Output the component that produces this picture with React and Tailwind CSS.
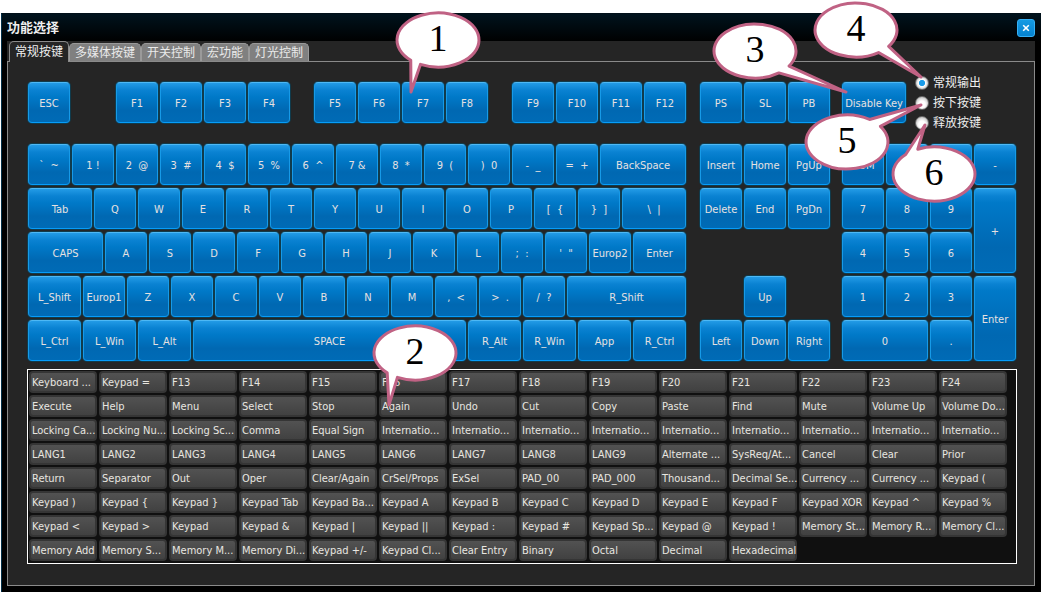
const KEY_ROWS = [
  [["` \u00a0~"], ["1 !"], ["2 \u00a0@"], ["3 \u00a0#"], ["4 \u00a0$"], ["5 \u00a0%"], ["6 \u00a0^"], ["7 &"], ["8 \u00a0*"], ["9 \u00a0("], [") \u00a00"], ["- \u00a0_"], ["= \u00a0+"], ["BackSpace", "col-span-8"]],
  [["Tab", "col-span-6"], ["Q"], ["W"], ["E"], ["R"], ["T"], ["Y"], ["U"], ["I"], ["O"], ["P"], ["[ \u00a0{"], ["} \u00a0]"], ["\\ \u00a0|", "col-span-6"]],
  [["CAPS", "col-span-7"], ["A"], ["S"], ["D"], ["F"], ["G"], ["H"], ["J"], ["K"], ["L"], ["; \u00a0:"], ["' \u00a0\""], ["Europ2"], ["Enter", "col-span-5"]],
  [["L_Shift", "col-span-5"], ["Europ1"], ["Z"], ["X"], ["C"], ["V"], ["B"], ["N"], ["M"], [", \u00a0<"], ["> \u00a0."], ["/ \u00a0?"], ["R_Shift", "col-span-11"]],
  [["L_Ctrl", "col-span-5"], ["L_Win", "col-span-5"], ["L_Alt", "col-span-5"], ["SPACE", "col-span-25"], ["R_Alt", "col-span-5"], ["R_Win", "col-span-5"], ["App", "col-span-5"], ["R_Ctrl", "col-span-5"]],
];

const FUNCTION_KEYS = [
  ["ESC"],
  ["F1", "col-span-4 col-start-9"], ["F2"], ["F3"], ["F4"],
  ["F5", "col-span-4 col-start-27"], ["F6"], ["F7"], ["F8"],
  ["F9", "col-span-4 col-start-45"], ["F10"], ["F11"], ["F12"],
];

const NAV_KEYS = [
  ["Insert"], ["Home"], ["PgUp"],
  ["Delete"], ["End"], ["PgDn"],
  ["Up", "col-span-4 col-start-5 row-start-4"],
  ["Left", "col-span-4 row-start-5"], ["Down", "col-span-4 row-start-5"], ["Right", "col-span-4 row-start-5"],
];

const PAD_KEYS = [
  ["NUM"], ["/"], ["*"], ["-"],
  ["7"], ["8"], ["9"], ["+", "col-span-4 row-span-2"],
  ["4"], ["5"], ["6"],
  ["1"], ["2"], ["3"], ["Enter", "col-span-4 row-span-2"],
  ["0", "col-span-8"], ["."],
];

const EXTRA_KEYS = [
  "Keyboard ...", "Keypad =", "F13", "F14", "F15", "F16", "F17", "F18", "F19", "F20", "F21", "F22", "F23", "F24",
  "Execute", "Help", "Menu", "Select", "Stop", "Again", "Undo", "Cut", "Copy", "Paste", "Find", "Mute", "Volume Up", "Volume Do...",
  "Locking Ca...", "Locking Nu...", "Locking Sc...", "Comma", "Equal Sign", "Internatio...", "Internatio...", "Internatio...", "Internatio...", "Internatio...", "Internatio...", "Internatio...", "Internatio...", "Internatio...",
  "LANG1", "LANG2", "LANG3", "LANG4", "LANG5", "LANG6", "LANG7", "LANG8", "LANG9", "Alternate ...", "SysReq/At...", "Cancel", "Clear", "Prior",
  "Return", "Separator", "Out", "Oper", "Clear/Again", "CrSel/Props", "ExSel", "PAD_00", "PAD_000", "Thousand...", "Decimal Se...", "Currency ...", "Currency ...", "Keypad (",
  "Keypad )", "Keypad {", "Keypad }", "Keypad Tab", "Keypad Ba...", "Keypad A", "Keypad B", "Keypad C", "Keypad D", "Keypad E", "Keypad F", "Keypad XOR", "Keypad ^", "Keypad %",
  "Keypad <", "Keypad >", "Keypad", "Keypad &", "Keypad |", "Keypad ||", "Keypad :", "Keypad #", "Keypad Sp...", "Keypad @", "Keypad !", "Memory St...", "Memory R...", "Memory Cl...",
  "Memory Add", "Memory S...", "Memory M...", "Memory Di...", "Keypad +/-", "Keypad Cl...", "Clear Entry", "Binary", "Octal", "Decimal", "Hexadecimal",
];

const TABS = ["常规按键", "多媒体按键", "开关控制", "宏功能", "灯光控制"];
const MODES = ["常规输出", "按下按键", "释放按键"];

// Balloon centre, the two points where the tail leaves the balloon, and the tail tip.
const CALLOUTS = [
  { n: 1, c: [438, 40], a: [420, 65], b: [411, 60], tip: [411, 92] },
  { n: 2, c: [415, 353], a: [397, 378], b: [387, 373], tip: [389, 405] },
  { n: 3, c: [755, 51], a: [789, 66], b: [779, 73], tip: [846, 92] },
  { n: 4, c: [856, 30], a: [890, 47], b: [879, 53], tip: [921, 77] },
  { n: 5, c: [847, 142], a: [870, 119], b: [881, 126], tip: [921, 105] },
  { n: 6, c: [934, 174], a: [905, 154], b: [917, 148], tip: [925, 125] },
];

const RX = 41;
const RY = 27;

function onBalloon([cx, cy], [x, y]) {
  const dx = (x - cx) / RX;
  const dy = (y - cy) / RY;
  const len = Math.hypot(dx, dy);
  return [cx + (RX * dx) / len, cy + (RY * dy) / len];
}

function Callout({ n, c, a, b, tip }) {
  let start = onBalloon(c, a);
  let end = onBalloon(c, b);
  const cross = (start[0] - c[0]) * (end[1] - c[1]) - (start[1] - c[1]) * (end[0] - c[0]);
  if (cross < 0) [start, end] = [end, start];
  return (
    <g>
      <path
        d={`M${end} A${RX} ${RY} 0 1 1 ${start} L${tip} Z`}
        fill="#fff"
        stroke="#c06284"
        strokeWidth="3"
        strokeLinejoin="round"
      />
      <text x={c[0]} y={c[1] + 11} textAnchor="middle" fontSize="38" fill="#000">
        {n}
      </text>
    </g>
  );
}

function Key({ label, span = "col-span-4" }) {
  return (
    <button
      type="button"
      className={`${span} flex min-w-0 items-center justify-center whitespace-nowrap rounded-[4px] border border-t-[#4db8f5] border-x-[#169ae8] border-b-[#069cfa] bg-[linear-gradient(180deg,#239be6_0px,#0a82d2_7px,#0079c8_14px,#0068b2_70%,#006bb6_100%)] pt-0.5 text-[#e6e1e1] shadow-[0_0_0_1px_rgba(0,78,110,0.55)]`}
    >
      {label}
    </button>
  );
}

function Keys({ keys }) {
  return keys.map(([label, span], i) => <Key key={i} label={label} span={span} />);
}

export default function App() {
  return (
    <div className="relative min-h-screen bg-white pl-px pr-0.5 pt-[13px] font-['DejaVu_Sans_Condensed','Noto_Sans_CJK_SC',sans-serif] text-[11px] leading-4">
      <main className="border-l border-t border-l-[#02304a] border-t-[#011019] bg-[linear-gradient(180deg,#00131d_0px,#000_28px)] pb-1.5 pl-[5px] pr-1.5">
        <header className="flex h-[27px] items-center justify-between">
          <h1 className="text-[13px] font-bold text-[#eeeeee]">功能选择</h1>
          <button
            type="button"
            aria-label="关闭"
            className="flex h-[18px] w-[18px] items-center justify-center rounded-[3px] border border-[#35b0f5] bg-[linear-gradient(180deg,#159be3,#0582cf)]"
          >
            <svg width="8" height="8" viewBox="0 0 8 8" stroke="#fff" strokeWidth="1.6">
              <path d="M1.2 1.2 6.8 6.8M6.8 1.2 1.2 6.8" />
            </svg>
          </button>
        </header>

        <div className="bg-[#252525]">
          <div role="tablist" className="flex h-5 items-end pl-0.5 text-xs">
            {TABS.map((tab, i) => (
              <button
                key={tab}
                type="button"
                role="tab"
                aria-selected={i === 0}
                className={
                  i === 0
                    ? "relative -mb-px h-[21px] rounded-t-[5px] border border-b-0 border-[#8a8a8a] bg-[#252525] px-[5px] text-[#eeeeee]"
                    : "h-[18px] rounded-t-[5px] border border-b-0 border-[#9a9a9a] bg-[#808080] px-[5px] text-[#eaeaea]"
                }
              >
                {tab}
              </button>
            ))}
          </div>

          <section className="border border-[#8a8a8a] pb-[21px] pl-[19px] pr-[17px] pt-5">
            <div className="flex px-px">
              <div className="mr-3.5 grid grow-[658] basis-0 auto-rows-[41px] grid-cols-[repeat(60,minmax(0,1fr))] gap-x-0.5">
                <Keys keys={FUNCTION_KEYS} />
              </div>
              <div className="mr-3 grid grow-[130] basis-0 auto-rows-[41px] grid-cols-[repeat(12,minmax(0,1fr))] gap-x-0.5">
                <Keys keys={[["PS"], ["SL"], ["PB"]]} />
              </div>
              <div className="grid grow-[174] basis-0 grid-cols-[repeat(16,minmax(0,1fr))] grid-rows-[41px] items-center gap-x-0.5">
                <Key label="Disable Key" span="col-span-6 h-full" />
                <fieldset className="col-span-10 -my-2 flex flex-col gap-1 pl-[7px] pt-px text-xs leading-4 text-[#eeeeee]">
                  {MODES.map((mode, i) => (
                    <label key={mode} className="flex h-4 items-center gap-1">
                      <input
                        type="radio"
                        name="mode"
                        defaultChecked={i === 0}
                        className="h-3.5 w-3.5 appearance-none rounded-full border border-[#6a6a6a] bg-[radial-gradient(circle_at_50%_60%,#fff_35%,#c4c4c4_75%)] checked:bg-[radial-gradient(circle,#1a9be8_32%,#fff_42%,#c4c4c4_75%)]"
                      />
                      {mode}
                    </label>
                  ))}
                </fieldset>
              </div>
            </div>

            <div className="mt-[21px] flex px-px">
              <div className="mr-3.5 grid grow-[658] basis-0 auto-rows-[41px] grid-cols-[repeat(60,minmax(0,1fr))] gap-x-0.5 gap-y-[3px]">
                <Keys keys={KEY_ROWS.flat()} />
              </div>
              <div className="mr-3 grid grow-[130] basis-0 auto-rows-[41px] grid-cols-[repeat(12,minmax(0,1fr))] gap-x-0.5 gap-y-[3px]">
                <Keys keys={NAV_KEYS} />
              </div>
              <div className="grid grow-[174] basis-0 auto-rows-[41px] grid-cols-[repeat(16,minmax(0,1fr))] gap-x-0.5 gap-y-[3px]">
                <Keys keys={PAD_KEYS} />
              </div>
            </div>

            <div className="mt-2 grid auto-rows-[22px] grid-cols-[repeat(14,minmax(0,1fr))] gap-0.5 border border-white bg-[#101010] pb-0.5 pl-px pr-[9px] pt-px">
              {EXTRA_KEYS.map((label, i) => (
                <button
                  key={i}
                  type="button"
                  className="whitespace-nowrap rounded-[4px] border-2 border-[#353535] bg-[linear-gradient(180deg,#525252,#414141)] pl-px pt-0.5 text-left text-[#e8e6e0]"
                >
                  {label}
                </button>
              ))}
            </div>
          </section>
        </div>
      </main>

      <svg
        className="pointer-events-none absolute left-0 top-0 font-['Liberation_Serif',serif]"
        width="1043"
        height="594"
        viewBox="0 0 1043 594"
      >
        {CALLOUTS.map((callout) => (
          <Callout key={callout.n} {...callout} />
        ))}
      </svg>
    </div>
  );
}
